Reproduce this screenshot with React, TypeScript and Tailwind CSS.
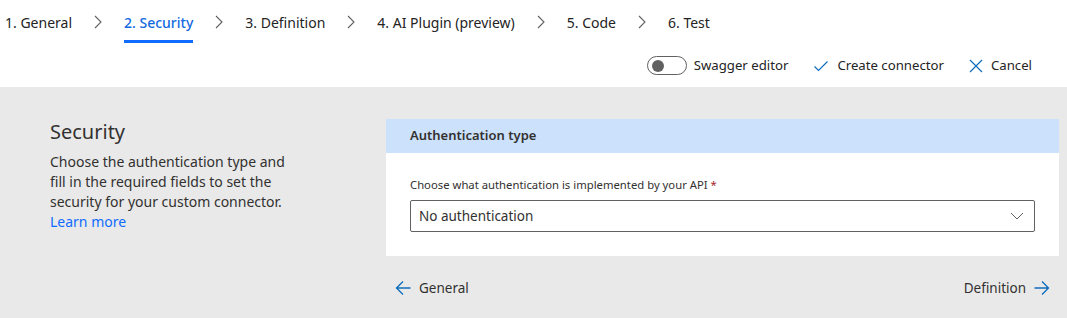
import React from "react";

const font = { fontFamily: '"Noto Sans", "Open Sans", sans-serif' };

function Chevron() {
  return (
    <svg width="8" height="14" viewBox="0 0 8 14" className="shrink-0">
      <path d="M1 1 L7 7 L1 13" fill="none" stroke="#616161" strokeWidth="1.1" />
    </svg>
  );
}

const tabs = ["1. General", "2. Security", "3. Definition", "4. AI Plugin (preview)", "5. Code", "6. Test"];

export default function App() {
  return (
    <div className="w-[1067px] h-[318px] flex flex-col bg-white text-[#242424]" style={font}>
      <div className="h-[87px] bg-white flex flex-col">
        <div className="flex items-center h-[44px] pl-[5px]">
          {tabs.map((t, i) => (
            <React.Fragment key={t}>
              <div className="relative h-full flex items-center">
                <span className={`text-[14px] ${i === 1 ? "text-[#1269e0] font-medium" : "text-[#242424]"}`}>{t}</span>
                {i === 1 && <div className="absolute left-0 right-0 top-[40px] h-[3px] bg-[#0f6cff]" />}
              </div>
              {i < tabs.length - 1 && (
                <div className="mx-[22px] flex items-center">
                  <Chevron />
                </div>
              )}
            </React.Fragment>
          ))}
        </div>
        <div className="flex items-center justify-end h-[42px] pt-[2px] pr-[35px] gap-[25px] text-[13.2px]">
          <div className="flex items-center gap-[7px]">
            <div className="w-[40px] h-[19px] rounded-full border border-[#616161] flex items-center pl-[4px]">
              <div className="w-[12px] h-[12px] rounded-full bg-[#616161]" />
            </div>
            <span>Swagger editor</span>
          </div>
          <div className="flex items-center gap-[8px]">
            <svg width="16" height="16" viewBox="0 0 16 16">
              <path d="M1.5 8.5 L5.5 12.5 L14.5 3.5" fill="none" stroke="#0f6cbd" strokeWidth="1.2" />
            </svg>
            <span>Create connector</span>
          </div>
          <div className="flex items-center gap-[8px]">
            <svg width="14" height="14" viewBox="0 0 14 14">
              <path d="M1 1 L13 13 M13 1 L1 13" fill="none" stroke="#0f6cbd" strokeWidth="1.2" />
            </svg>
            <span>Cancel</span>
          </div>
        </div>
      </div>
      <div className="flex-1 bg-[#e9e9e9] flex">
        <div className="w-[386px] pl-[50px] pt-[31px]">
          <h2 className="text-[20px] leading-[28px] text-[#323130]">Security</h2>
          <p className="mt-[6px] w-[250px] text-[14px] leading-[20px] text-[#323130]">
            Choose the authentication type and fill in the required fields to set the security for your custom connector.{" "}
            <span className="text-[#0f6cff]">Learn more</span>
          </p>
        </div>
        <div className="w-[673px] pt-[32px] flex flex-col">
          <div className="bg-white">
            <div className="h-[34px] bg-[#cce1fb] flex items-center pl-[24px] text-[13px] font-semibold text-[#323130]">
              Authentication type
            </div>
            <div className="px-[24px] pt-[24px] pb-[24px]">
              <div className="text-[11.3px] leading-[16px] text-[#323130]">
                Choose what authentication is implemented by your API <span className="text-[#a4262c]">*</span>
              </div>
              <div className="mt-[7px] h-[32px] border border-[#616161] rounded-[2px] flex items-center justify-between pl-[8px] pr-[10px]">
                <span className="text-[13.5px] text-[#323130]">No authentication</span>
                <svg width="14" height="8" viewBox="0 0 14 8">
                  <path d="M1 1 L7 7 L13 1" fill="none" stroke="#616161" strokeWidth="1" />
                </svg>
              </div>
            </div>
          </div>
          <div className="flex items-center justify-between mt-[22px] px-[9px] text-[13.5px] text-[#323130]">
            <div className="flex items-center gap-[8px]">
              <svg width="16" height="16" viewBox="0 0 16 16">
                <path d="M8 1.5 L1.5 8 L8 14.5 M1.5 8 L15.5 8" fill="none" stroke="#0f6cbd" strokeWidth="1.3" />
              </svg>
              <span>General</span>
            </div>
            <div className="flex items-center gap-[8px]">
              <span>Definition</span>
              <svg width="16" height="16" viewBox="0 0 16 16">
                <path d="M8 1.5 L14.5 8 L8 14.5 M14.5 8 L0.5 8" fill="none" stroke="#0f6cbd" strokeWidth="1.3" />
              </svg>
            </div>
          </div>
        </div>
      </div>
    </div>
  );
}
